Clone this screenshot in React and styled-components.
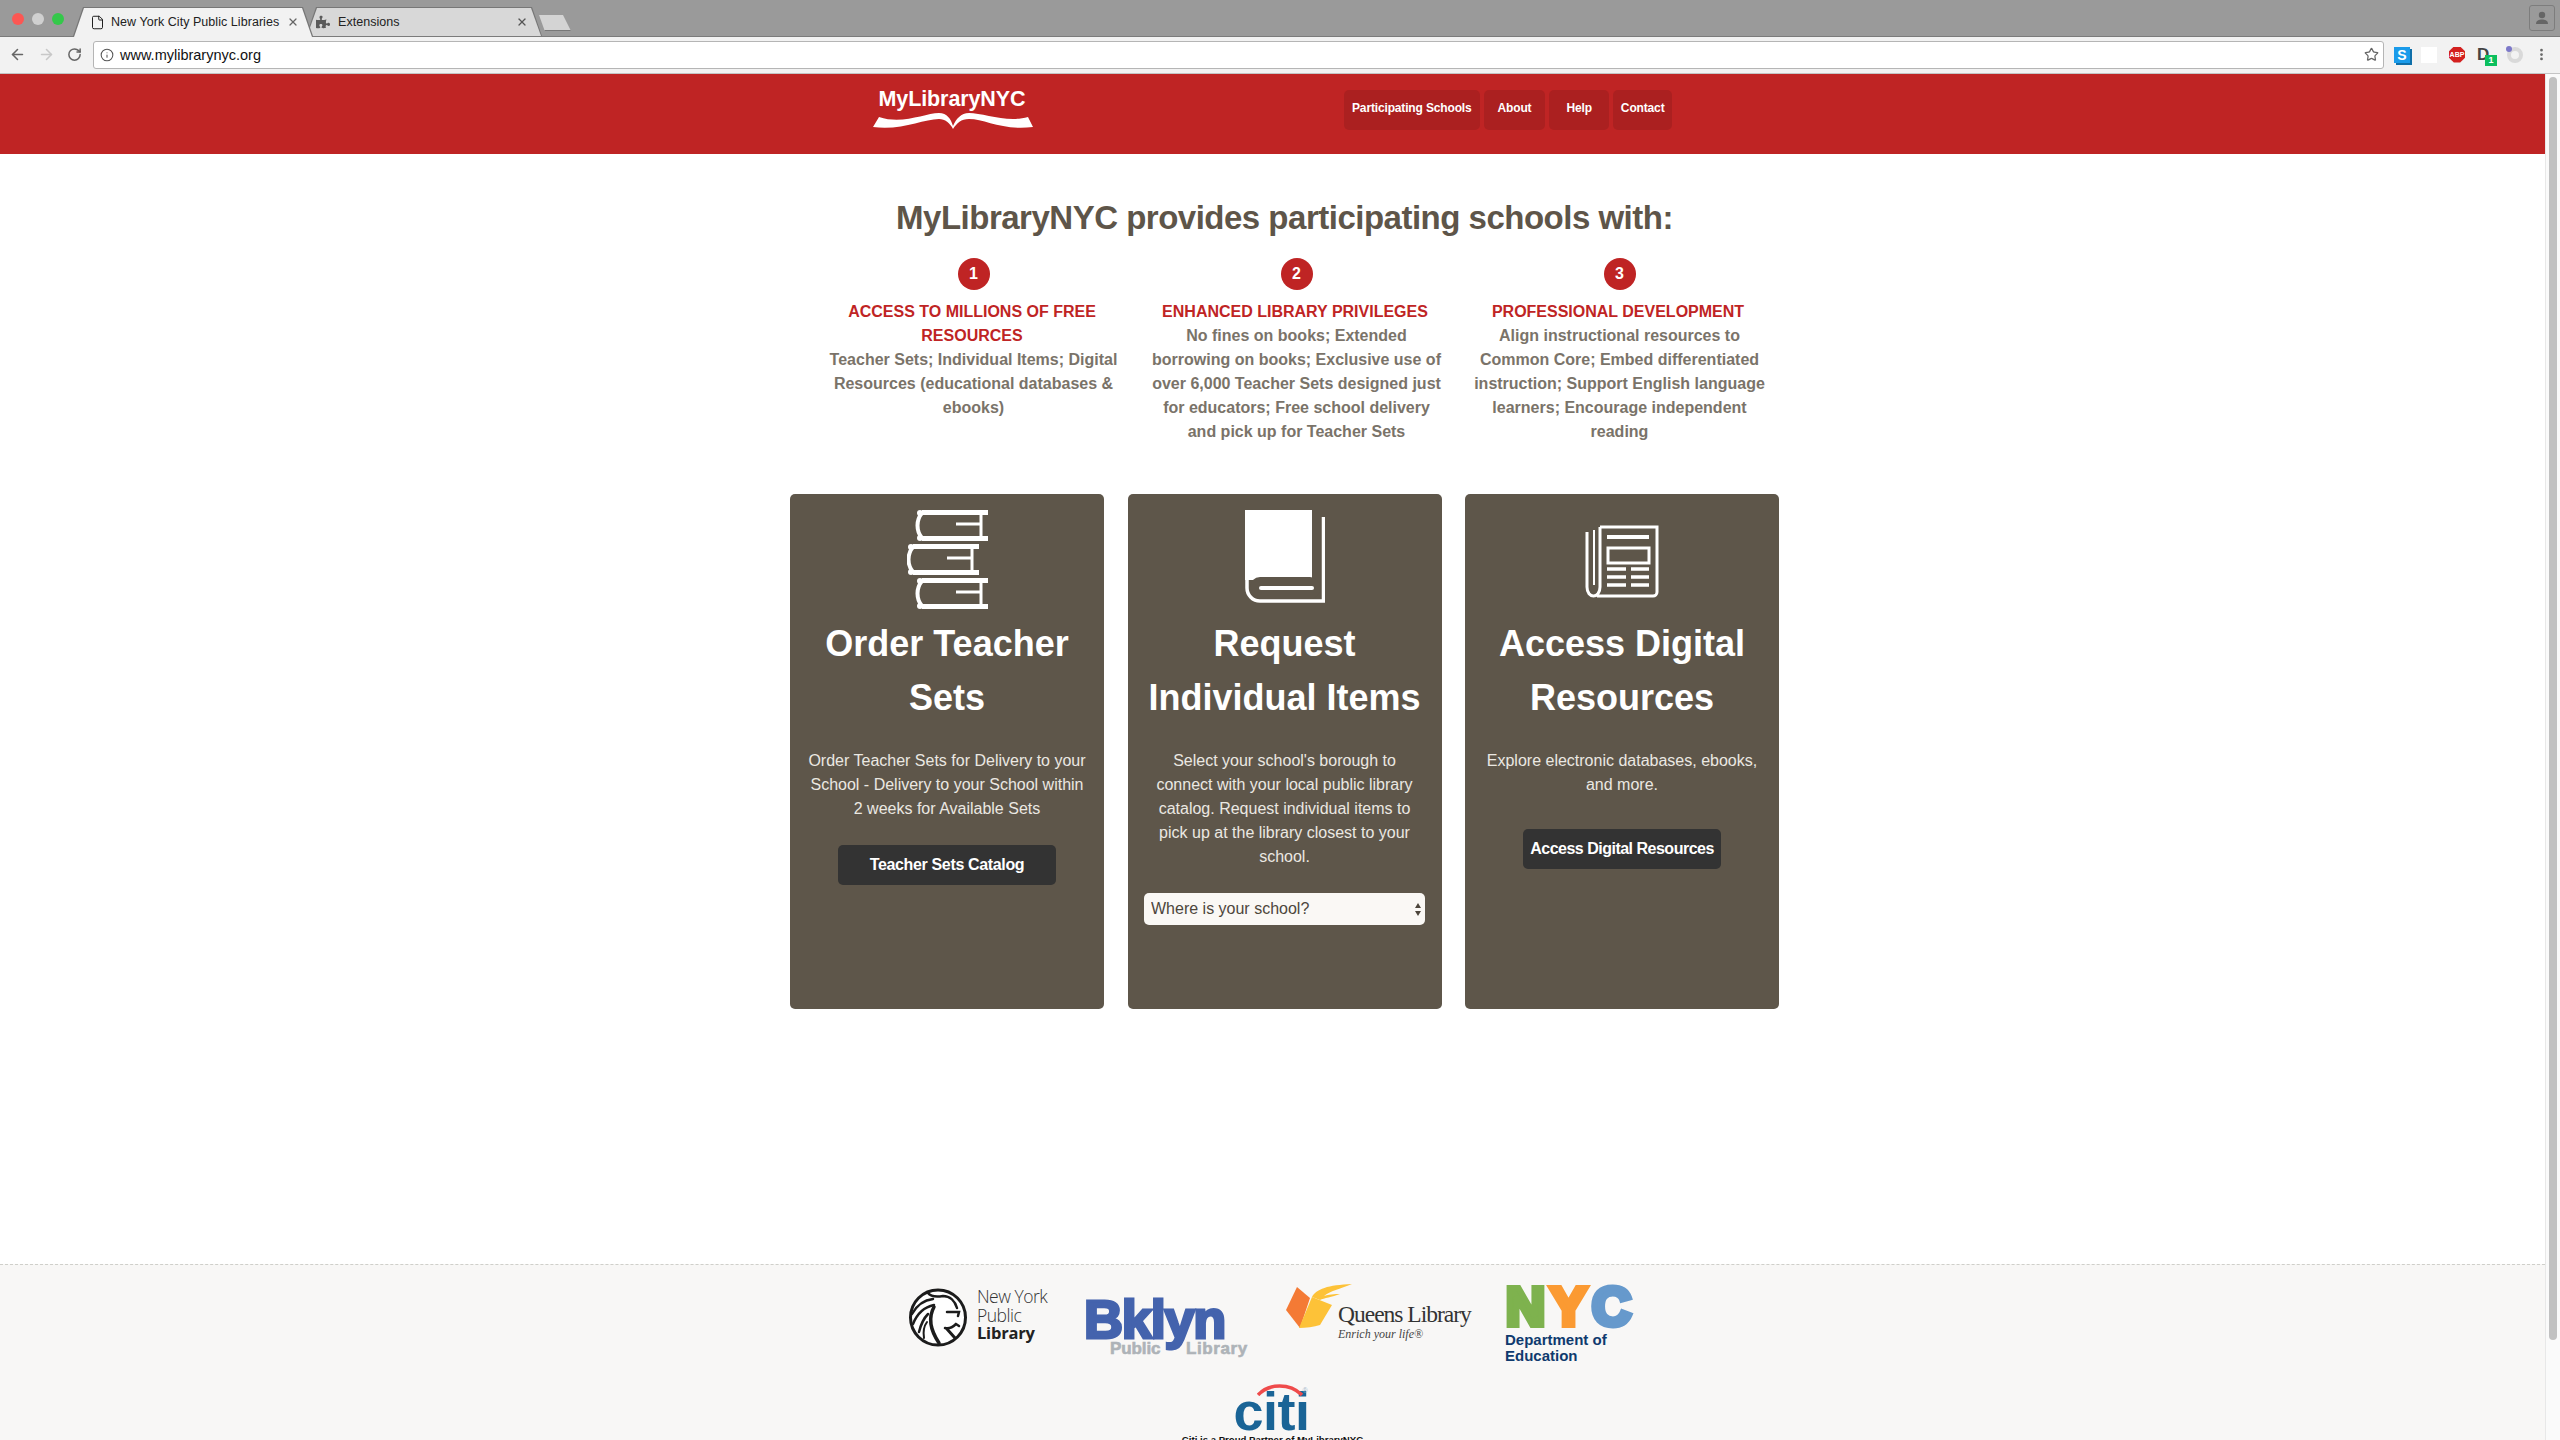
import React from 'react';
import styled, { createGlobalStyle } from 'styled-components';
import { ArrowLeft, ArrowRight, RotateCw, Info, Star, X, File, EllipsisVertical } from 'lucide-react';
import { FaPuzzlePiece } from 'react-icons/fa';

const Global = createGlobalStyle`
  html, body { margin: 0; padding: 0; height: 1440px; overflow: hidden; background: #fff; }
  body { font-family: "Liberation Sans", Arial, sans-serif; }
  * { box-sizing: border-box; }
`;

const Browser = styled.div`display:flex;flex-direction:column;width:2560px;height:1440px;overflow:hidden;`;
const TabStrip = styled.div`display:flex;align-items:flex-end;height:37px;background:#9a9a9a;border-bottom:1px solid #7b7b7b;padding-left:12px;position:relative;`;
const Lights = styled.div`display:flex;gap:8px;align-self:flex-start;margin-top:13px;width:61px;`;
const Light = styled.span`width:12px;height:12px;border-radius:50%;background:${p => p.$c};`;
const Tab = styled.div`
  position:relative;height:29px;width:${p => p.$w}px;margin-left:${p => p.$ml || 0}px;z-index:${p => p.$active ? 2 : 1};display:flex;align-items:center;padding:1px 14px 0 ${p => p.$pl}px;
  font-size:12.5px;color:#222;white-space:nowrap;
  &::before{content:"";position:absolute;inset:0;background:#777;clip-path:polygon(0 100%,10px 0,calc(100% - 10px) 0,100% 100%);}
  &::after{content:"";position:absolute;inset:1px 1px ${p => p.$active ? '-1px' : '0'} 1px;background:${p => p.$active ? '#f2f2f2' : '#d8d8d8'};clip-path:polygon(0 100%,10px 0,calc(100% - 10px) 0,100% 100%);}
  > * { position:relative; z-index:1; }
`;
const TabTitle = styled.span`flex:1;margin-left:${p => p.$ml}px;letter-spacing:.05px;`;
const NewTab = styled.div`width:32px;height:16px;margin:0 0 5px -3px;background:#d4d4d4;border-bottom:1px solid #777;clip-path:polygon(0 0,75% 0,100% 100%,18% 100%);`;
const ProfileBtn = styled.div`margin:0 5px 5px auto;width:26px;height:26px;border:1px solid #7d7d7d;border-radius:3px;display:flex;align-items:center;justify-content:center;`;
const Toolbar = styled.div`display:flex;align-items:center;height:37px;background:#f2f2f2;border-bottom:1px solid #c4c4c4;padding:0 0 1px 9px;color:#666;`;
const NavIcons = styled.div`display:flex;gap:12px;width:84px;align-items:center;`;
const Omnibox = styled.div`display:flex;align-items:center;width:2291px;height:28px;background:#fff;border:1px solid #b5b5b5;border-radius:3px;padding:0 4px 0 6px;font-size:14.5px;color:#111;`;
const Url = styled.span`flex:1;margin-left:6px;`;
const Extensions = styled.div`display:flex;align-items:center;margin-left:10px;gap:12px;`;
const ExtS = styled.div`width:16px;height:16px;background:#1a9bea;box-shadow:2px 2px 0 #0f6fa9;color:#fff;font-weight:bold;font-size:14px;line-height:16px;text-align:center;`;
const ExtBlank = styled.div`width:16px;height:16px;background:#fff;margin-left:-1px;`;
const ExtAbp = styled.div`width:16px;height:16px;background:#d3201f;color:#fff;font-weight:bold;font-size:7px;line-height:16px;text-align:center;clip-path:polygon(30% 0,70% 0,100% 30%,100% 70%,70% 100%,30% 100%,0 70%,0 30%);`;
const ExtD = styled.div`position:relative;width:16px;height:16px;color:#444;font-weight:bold;font-size:17px;line-height:15px;`;
const Badge = styled.span`position:absolute;left:8px;top:8px;width:12px;height:11px;background:#0bbf5e;color:#fff;font-size:9px;line-height:11px;text-align:center;`;
const ExtRing = styled.div`position:relative;width:16px;height:16px;border-radius:50%;border:4px solid #d9d9d9;margin-left:2px;`;
const RingDot = styled.span`position:absolute;left:-5px;top:-5px;width:6px;height:6px;border-radius:50%;background:#7c78c9;`;
const MenuDots = styled.span`display:flex;margin-left:-1px;`;
const Viewport = styled.div`display:flex;flex:1;min-height:0;`;
const Page = styled.div`width:2545px;flex:none;display:flex;flex-direction:column;overflow:hidden;`;
const Scrollbar = styled.div`width:15px;flex:none;background:#fafafa;border-left:1px solid #e8e8e8;padding:3px 3px 0 3px;`;
const Thumb = styled.div`width:8px;height:1263px;border-radius:4px;background:#c1c1c1;`;

const Header = styled.header`height:80px;flex:none;background:#bf2424;display:flex;`;
const Logo = styled.div`margin:15px 0 0 873px;width:160px;display:flex;flex-direction:column;align-items:center;color:#fff;`;
const LogoName = styled.div`font-weight:bold;font-size:21.5px;line-height:21px;letter-spacing:-.1px;margin-right:2px;`;
const Nav = styled.nav`display:flex;gap:4px;margin:16px 0 0 311px;`;
const NavItem = styled.a`height:40px;padding:0 ${p => p.$px}px;background:#ab2020;border-radius:5px;color:#fff;font-weight:bold;font-size:12px;line-height:37px;letter-spacing:-.15px;`;

const Main = styled.main`height:1110px;flex:none;width:989px;margin-left:790px;padding-top:40px;`;
const Heading = styled.h1`margin:0;text-align:center;font-size:33px;line-height:48px;letter-spacing:-.5px;color:#5e5549;font-weight:bold;`;
const Features = styled.div`display:grid;grid-template-columns:repeat(3,323px);padding-left:22px;margin-top:16px;height:236px;`;
const Feature = styled.div`display:flex;flex-direction:column;align-items:center;padding:0 12px;text-align:center;font-size:16px;line-height:24px;font-weight:bold;color:#7a7369;`;
const Num = styled.div`width:32px;height:32px;border-radius:50%;background:#bf2424;color:#fff;font-size:16px;line-height:32px;margin-bottom:10px;`;
const FeatureTitle = styled.div`color:#bf2424;padding-right:3px;`;
const Cards = styled.div`display:grid;grid-template-columns:repeat(3,314px);column-gap:23.5px;`;
const Card = styled.section`height:515px;background:#5e564a;border-radius:5px;padding:16px;display:flex;flex-direction:column;align-items:center;text-align:center;color:#fff;`;
const IconBox = styled.div`height:107px;display:flex;justify-content:center;align-items:flex-start;padding-top:${p => p.$top || 0}px;`;
const CardTitle = styled.h2`margin:0;font-size:36px;line-height:54px;font-weight:bold;`;
const CardText = styled.p`margin:24px 0 ${p => p.$after}px;font-size:16px;line-height:24px;color:#ebe8e2;`;
const ActionBtn = styled.a`height:40px;padding:0 ${p => p.$px}px;background:#333;border-radius:5px;color:#fff;font-size:16px;font-weight:bold;line-height:40px;letter-spacing:${p => p.$ls}px;`;
const SelectWrap = styled.div`position:relative;width:281px;height:32px;`;
const Select = styled.select`appearance:none;width:100%;height:32px;border:0;border-radius:5px;background:#faf8f5;padding:0 7px 2px;font:16px "Liberation Sans",Arial,sans-serif;color:#4d463c;`;
const SelectArrows = styled.svg`position:absolute;right:4px;top:10px;pointer-events:none;`;

const Footer = styled.footer`flex:1;background:#f8f7f6;border-top:1px dashed #cfcfca;display:flex;flex-direction:column;align-items:center;`;
const LogoRow = styled.div`display:flex;align-items:flex-start;padding-top:18px;height:123px;width:727px;`;
const Nypl = styled.div`display:flex;width:175px;padding-top:5px;`;
const NyplWords = styled.div`margin:-1px 0 0 10px;font-family:"Open Sans",sans-serif;font-size:17.5px;line-height:18.5px;letter-spacing:-.5px;color:#333;font-weight:300;`;
const NyplBold = styled.div`font-weight:700;font-size:16.5px;letter-spacing:-.2px;color:#222;`;
const Bklyn = styled.div`width:167px;height:72px;position:relative;`;
const BklynWord = styled.div`margin-top:11px;font-family:"Liberation Sans",sans-serif;font-weight:bold;font-size:54px;line-height:50px;letter-spacing:-1.2px;color:#4463ad;-webkit-text-stroke:3px #4463ad;`;
const BklynSub = styled.div`position:absolute;top:57px;left:${p => p.$left}px;font-weight:bold;font-size:17px;line-height:18px;letter-spacing:${p => p.$ls}px;color:#aeb3b8;-webkit-text-stroke:.6px #aeb3b8;`;
const Queens = styled.div`position:relative;width:219px;margin-left:35px;height:60px;`;
const QueensIcon = styled.svg`position:absolute;left:0;top:0;`;
const QueensName = styled.div`position:absolute;left:52px;top:16px;font-family:"Liberation Serif",serif;font-size:23.5px;line-height:30px;letter-spacing:-1px;color:#333;white-space:nowrap;`;
const QueensTag = styled.div`position:absolute;left:52px;top:44px;font-family:"Liberation Serif",serif;font-style:italic;font-size:12px;line-height:15px;color:#444;white-space:nowrap;`;
const NycBlock = styled.div`width:131px;padding-top:2px;margin-left:-1px;`;
const NycMark = styled.div`display:flex;font-weight:bold;font-size:54px;line-height:43px;height:43px;letter-spacing:5.5px;padding-left:2px;`;
const NycLetter = styled.span`color:${p => p.$c};-webkit-text-stroke:6px ${p => p.$c};`;
const NycText = styled.div`margin:4px 0 0 1px;font-weight:bold;font-size:15px;line-height:16px;color:#0f3a6e;white-space:nowrap;`;
const CitiBlock = styled.div`display:flex;flex-direction:column;align-items:center;position:relative;`;
const CitiArc = styled.svg`position:absolute;left:50%;margin-left:-15px;top:-5px;`;
const CitiMark = styled.span`position:absolute;left:50%;margin-left:30px;top:-1px;font-size:7px;line-height:8px;color:#9fb4c9;`;
const CitiWord = styled.div`margin-top:1px;margin-right:2px;font-weight:bold;font-size:54px;line-height:44px;color:#1a6496;letter-spacing:-.5px;`;
const CitiCaption = styled.div`font-size:9.6px;font-weight:bold;line-height:12px;color:#111;white-space:nowrap;margin-top:1px;`;

const BookStack = () => (
  <svg width="81" height="99" viewBox="0 0 81 99" fill="none" stroke="#fff">
    {[[9, 0], [0, 34], [9, 68]].map(([x, y], i) => (
      <g key={i} transform={`translate(${x} ${y})`}>
        <path d="M72 2.5H6M6 28.5H72" strokeWidth="5" />
        <path d="M6 3C0 10 0 21 6 28" strokeWidth="4" />
        <path d="M40 14H65M65 4V27" strokeWidth="3" />
        <circle cx="4" cy="3" r="3" fill="#fff" stroke="none" />
        <circle cx="4" cy="28" r="3" fill="#fff" stroke="none" />
      </g>
    ))}
  </svg>
);
const SingleBook = () => (
  <svg width="80" height="93" viewBox="0 0 80 93" fill="none">
    <rect x="0" y="0" width="67" height="70" fill="#fff" />
    <path d="M2 60V78A13 13 0 0 0 15 91H78.5V7" stroke="#fff" strokeWidth="3.5" />
    <rect x="5" y="67" width="70" height="22" rx="10" fill="#5e564a" />
    <path d="M16 78H67" stroke="#fff" strokeWidth="4" strokeLinecap="round" />
  </svg>
);
const Newspaper = () => (
  <svg width="74" height="73" viewBox="0 0 74 73" fill="none" stroke="#fff" strokeWidth="3">
    <path d="M15 2H72V67A4 4 0 0 1 68 71H12" />
    <path d="M2 7V62C2 74 15 74 15 62V2" />
    <path d="M9 5V60" strokeWidth="2" />
    <path d="M22 12H64" strokeWidth="4" />
    <rect x="23" y="23" width="41" height="15" />
    <path d="M22 44H41M46 44H64M22 52H41M46 52H64M22 60H41M46 60H64" strokeWidth="3.5" />
  </svg>
);
const Swoosh = () => (
  <svg width="160" height="16" viewBox="0 0 160 16" style={{ marginTop: 3 }}>
    <path fill="#fff" d="M6 4C30 12 52 0 66 0C74 0 78 6 80 13C83 6 88 0 96 0C110 0 134 10 155 4L160 14C130 18 112 6 96 6C88 6 84 10 80 16C77 10 72 6 66 6C50 6 28 18 0 14Z" />
  </svg>
);
const Lion = () => (
  <svg width="58" height="59" viewBox="0 0 58 59" fill="none">
    <circle cx="29" cy="29.5" r="27.5" fill="#fff" stroke="#1c1c1c" strokeWidth="3" />
    <g stroke="#1c1c1c" strokeLinecap="round" fill="none">
      <path d="M3 26C8 17 15 12 24 11" strokeWidth="2.5" />
      <path d="M4 36C8 26 15 19 25 17" strokeWidth="2.5" />
      <path d="M19 5C22 9 28 9 34 8C41 8 46 13 48 20" strokeWidth="2.5" />
      <path d="M25 19C20 28 20 40 30 55" strokeWidth="3.5" />
      <path d="M10 44C12 36 15 30 19 26" strokeWidth="2.5" />
      <path d="M15 50C14 44 15 38 18 34" strokeWidth="2" />
      <path d="M38 24H50L49 28" strokeWidth="2.5" />
      <path d="M36 40C40 41 44 39 47 36L50 38" strokeWidth="2.5" />
      <path d="M38 41L46 50" strokeWidth="3" />
    </g>
  </svg>
);

const Icon = (s, c = '#666', w = 2) => ({ size: s, color: c, strokeWidth: w });

export default function App() {
  return (
    <Browser>
      <Global />
      <TabStrip>
        <Lights>
          <Light $c="#fc5753" />
          <Light $c="#d0d0d0" />
          <Light $c="#34c84a" />
        </Lights>
        <Tab $w={240} $pl={17} $active>
          <File {...Icon(15, '#111', 1.5)} />
          <TabTitle $ml={6}>New York City Public Libraries</TabTitle>
          <X {...Icon(12, '#666', 2.5)} />
        </Tab>
        <Tab $w={236} $pl={10} $ml={-7}>
          <FaPuzzlePiece size={14} color="#5a5a5a" />
          <TabTitle $ml={8}>Extensions</TabTitle>
          <X {...Icon(12, '#555', 2.5)} />
        </Tab>
        <NewTab />
        <ProfileBtn>
          <svg width="14" height="14" viewBox="0 0 14 14" fill="#666"><circle cx="7" cy="4" r="3.2" /><path d="M1 13C1 9.5 4 8.5 7 8.5S13 9.5 13 13Z" /></svg>
        </ProfileBtn>
      </TabStrip>
      <Toolbar>
        <NavIcons>
          <ArrowLeft {...Icon(17, '#666', 2.2)} />
          <ArrowRight {...Icon(17, '#c8c8c8', 2.2)} />
          <RotateCw {...Icon(15, '#666', 2.4)} />
        </NavIcons>
        <Omnibox>
          <Info {...Icon(14, '#555', 1.8)} />
          <Url>www.mylibrarynyc.org</Url>
          <Star {...Icon(15, '#666', 2)} />
        </Omnibox>
        <Extensions>
          <ExtS>S</ExtS>
          <ExtBlank />
          <ExtAbp>ABP</ExtAbp>
          <ExtD>D<Badge>1</Badge></ExtD>
          <ExtRing><RingDot /></ExtRing>
          <MenuDots><EllipsisVertical {...Icon(15, '#666', 2.4)} /></MenuDots>
        </Extensions>
      </Toolbar>
      <Viewport>
        <Page>
          <Header>
            <Logo>
              <LogoName>MyLibraryNYC</LogoName>
              <Swoosh />
            </Logo>
            <Nav>
              <NavItem $px={8}>Participating Schools</NavItem>
              <NavItem $px={14}>About</NavItem>
              <NavItem $px={17}>Help</NavItem>
              <NavItem $px={8}>Contact</NavItem>
            </Nav>
          </Header>
          <Main>
            <Heading>MyLibraryNYC provides participating schools with:</Heading>
            <Features>
              <Feature>
                <Num>1</Num>
                <FeatureTitle>ACCESS TO MILLIONS OF FREE RESOURCES</FeatureTitle>
                Teacher Sets; Individual Items; Digital Resources (educational databases &amp; ebooks)
              </Feature>
              <Feature>
                <Num>2</Num>
                <FeatureTitle>ENHANCED LIBRARY PRIVILEGES</FeatureTitle>
                No fines on books; Extended borrowing on books; Exclusive use of over 6,000 Teacher Sets designed just for educators; Free school delivery and pick up for Teacher Sets
              </Feature>
              <Feature>
                <Num>3</Num>
                <FeatureTitle>PROFESSIONAL DEVELOPMENT</FeatureTitle>
                Align instructional resources to Common Core; Embed differentiated instruction; Support English language learners; Encourage independent reading
              </Feature>
            </Features>
            <Cards>
              <Card>
                <IconBox><BookStack /></IconBox>
                <CardTitle>Order Teacher Sets</CardTitle>
                <CardText $after={24}>Order Teacher Sets for Delivery to your School - Delivery to your School within 2 weeks for Available Sets</CardText>
                <ActionBtn $px={32} $ls={-0.35}>Teacher Sets Catalog</ActionBtn>
              </Card>
              <Card>
                <IconBox><SingleBook /></IconBox>
                <CardTitle>Request Individual Items</CardTitle>
                <CardText $after={24}>Select your school's borough to connect with your local public library catalog. Request individual items to pick up at the library closest to your school.</CardText>
                <SelectWrap>
                  <Select defaultValue="">
                    <option value="">Where is your school?</option>
                  </Select>
                  <SelectArrows width="6" height="13" viewBox="0 0 6 13" fill="#4d463c"><path d="M3 0L6 5H0ZM3 13L0 8H6Z" /></SelectArrows>
                </SelectWrap>
              </Card>
              <Card>
                <IconBox $top={15}><Newspaper /></IconBox>
                <CardTitle>Access Digital Resources</CardTitle>
                <CardText $after={32}>Explore electronic databases, ebooks, and more.</CardText>
                <ActionBtn $px={7} $ls={-0.5}>Access Digital Resources</ActionBtn>
              </Card>
            </Cards>
          </Main>
          <Footer>
            <LogoRow>
              <Nypl>
                <Lion />
                <NyplWords>
                  New York<br />Public<NyplBold>Library</NyplBold>
                </NyplWords>
              </Nypl>
              <Bklyn>
                <BklynWord>Bklyn</BklynWord>
                <BklynSub $left={26} $ls={-.1}>Public</BklynSub>
                <BklynSub $left={102} $ls={.6}>Library</BklynSub>
              </Bklyn>
              <Queens>
                <QueensIcon width="66" height="46" viewBox="0 0 66 46">
                  <path fill="#f47a35" d="M11 4L24 15L14 45L0 27Z" />
                  <path fill="#fdc238" d="M26 14L46 22L34 42C28 44 20 45 13 45Z" />
                  <path fill="#fdc238" d="M26 14C30 6 42 2 66 1C54 6 44 8 38 13C45 11 52 11 54 11C46 14 38 15 34 17Z" />
                </QueensIcon>
                <QueensName>Queens Library</QueensName>
                <QueensTag>Enrich your life®</QueensTag>
              </Queens>
              <NycBlock>
                <NycMark>
                  <NycLetter $c="#7eb24e">N</NycLetter>
                  <NycLetter $c="#fb9a32">Y</NycLetter>
                  <NycLetter $c="#6699cc">C</NycLetter>
                </NycMark>
                <NycText>Department of<br />Education</NycText>
              </NycBlock>
            </LogoRow>
            <CitiBlock>
              <CitiArc width="46" height="13" viewBox="0 0 46 13" fill="none">
                <path d="M1 12C12 0 33 0 45 12" stroke="#ef4b4b" strokeWidth="3.5" />
              </CitiArc>
              <CitiMark>®</CitiMark>
              <CitiWord>citi</CitiWord>
              <CitiCaption>Citi is a Proud Partner of MyLibraryNYC</CitiCaption>
            </CitiBlock>
          </Footer>
        </Page>
        <Scrollbar><Thumb /></Scrollbar>
      </Viewport>
    </Browser>
  );
}
